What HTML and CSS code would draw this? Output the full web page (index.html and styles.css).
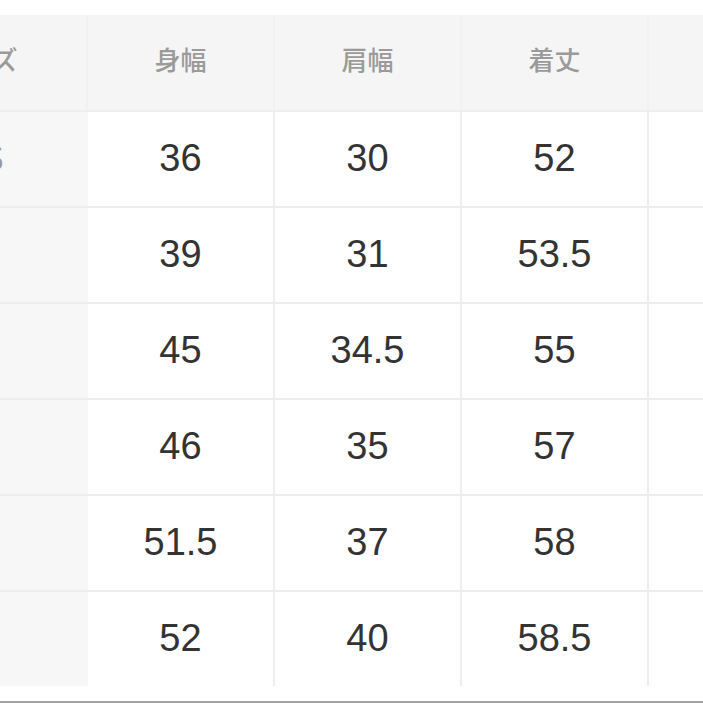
FILE: index.html
```html
<!DOCTYPE html>
<html lang="ja">
<head>
<meta charset="utf-8">
<title>サイズ表</title>
<link rel="stylesheet" href="styles.css">
</head>
<body>
<div class="page">
  <div class="chart">
    <div class="cell head label">サイズ</div>
    <div class="cell head">身幅</div>
    <div class="cell head">肩幅</div>
    <div class="cell head">着丈</div>
    <div class="cell head">そで丈</div>

    <div class="cell label">XS</div>
    <div class="cell">36</div><div class="cell">30</div><div class="cell">52</div><div class="cell">17</div>

    <div class="cell label">S</div>
    <div class="cell">39</div><div class="cell">31</div><div class="cell">53.5</div><div class="cell">18</div>

    <div class="cell label">M</div>
    <div class="cell">45</div><div class="cell">34.5</div><div class="cell">55</div><div class="cell">19</div>

    <div class="cell label">L</div>
    <div class="cell">46</div><div class="cell">35</div><div class="cell">57</div><div class="cell">20</div>

    <div class="cell label">LL</div>
    <div class="cell">51.5</div><div class="cell">37</div><div class="cell">58</div><div class="cell">21</div>

    <div class="cell label">3L</div>
    <div class="cell">52</div><div class="cell">40</div><div class="cell">58.5</div><div class="cell">21.5</div>
  </div>
  <div class="rule"></div>
</div>
</body>
</html>
```
FILE: styles.css
```css
html, body {
  margin: 0;
  padding: 0;
  background: #ffffff;
  overflow: hidden;
}

.page {
  padding-top: 15px;
  width: 703px;
  height: 703px;
  box-sizing: border-box;
  display: flex;
  flex-direction: column;
}

.chart {
  margin-left: -128px;
  width: 962px;
  display: grid;
  grid-template-columns: 214px 185px 185px 185px 185px;
  grid-template-rows: 95px repeat(6, 94px);
  gap: 2px;
  background: #eeeeee;
}

.cell {
  display: flex;
  align-items: center;
  justify-content: center;
  background: #ffffff;
  color: #333333;
  font-family: "Liberation Sans", Arial, sans-serif;
  font-size: 38px;
  padding-bottom: 2px;
}

.cell.label {
  background: #f7f7f7;
  color: #9a9a9a;
  margin-right: -2px;
  padding-right: 3px;
}

.cell.head {
  background: #f5f5f5;
  color: #9a9a9a;
  font-family: "Noto Sans CJK JP", "Noto Sans", sans-serif;
  font-size: 26px;
  font-weight: 500;
  padding-bottom: 8px;
  margin-right: -2px;
  border-right: 2px solid #f1f1f1;
}

.cell.head.label {
  padding-right: 0;
}

.rule {
  margin-top: 15px;
  height: 2px;
  background: #a3a3a3;
}
```
